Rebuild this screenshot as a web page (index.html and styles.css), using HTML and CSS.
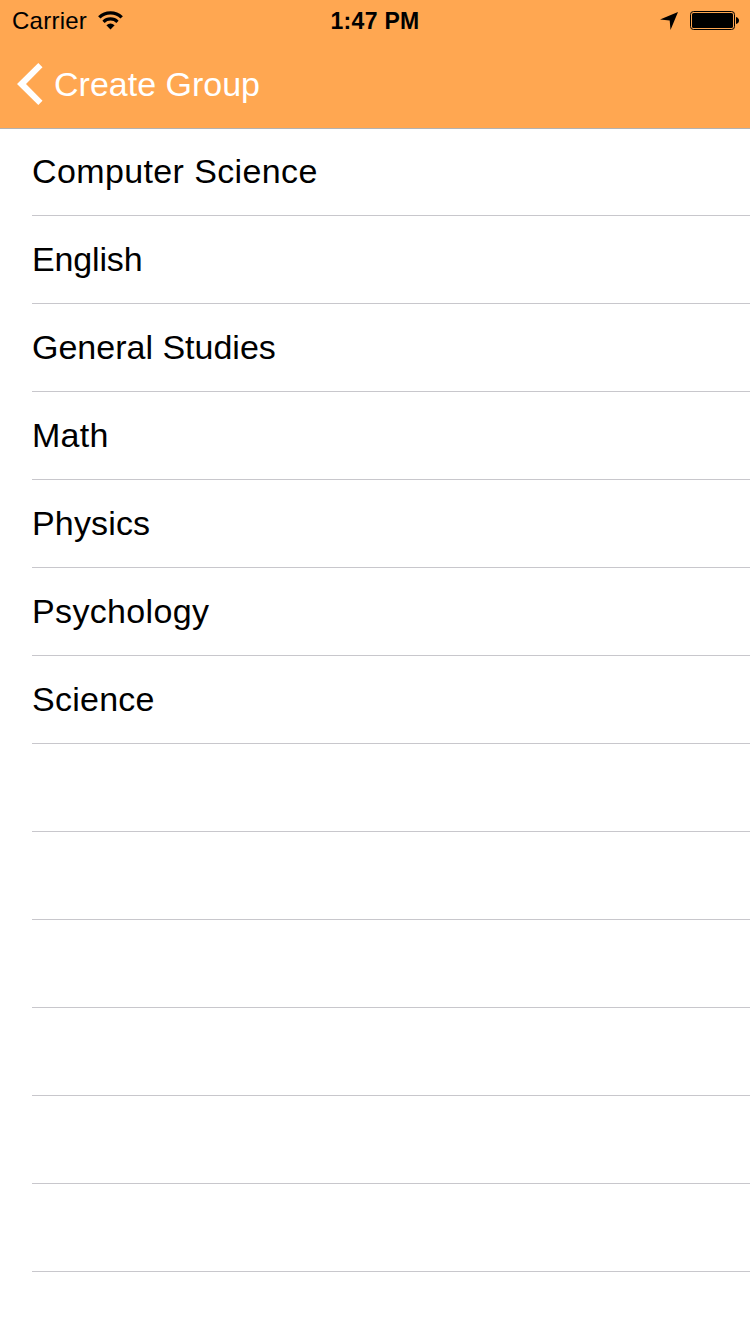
FILE: index.html
```html
<!DOCTYPE html>
<html lang="en">
<head>
<meta charset="utf-8">
<title>Create Group</title>
<link rel="stylesheet" href="styles.css">
</head>
<body>
<header class="header">
  <div class="status">
    <div class="status-left">
      <span class="carrier">Carrier</span>
      <svg class="wifi" width="26" height="20" viewBox="0 0 26 20">
        <path d="M1.3 6.4A16 16 0 0 1 23.7 6.4" fill="none" stroke="#000" stroke-width="3.4"/>
        <path d="M5.5 10.8A10 10 0 0 1 19.5 10.8" fill="none" stroke="#000" stroke-width="3.2"/>
        <path d="M12.5 18.6L8.4 14.3Q12.5 10.9 16.6 14.3Z"/>
      </svg>
    </div>
    <span class="clock">1:47 PM</span>
    <div class="status-right">
      <svg width="18" height="18" viewBox="0 0 18 18"><path d="M18 0L10.5 18L9.7 8.4L0 7.6Z"/></svg>
      <svg width="50" height="20" viewBox="0 0 50 20">
        <rect x=".5" y=".5" width="44" height="18" rx="3" fill="none" stroke="#000"/>
        <rect x="2" y="2" width="41" height="15" rx="1.6"/>
        <path d="M46 6Q49 7 49 9.5T46 13Z"/>
      </svg>
    </div>
  </div>
  <nav class="nav">
    <svg class="chevron" width="26" height="42" viewBox="0 0 26 42"><path d="M21.3 0L25.5 4.2L9 21L25.5 37.8L21.3 42L0 21Z" fill="#fff"/></svg>
    <span class="back">Create Group</span>
  </nav>
</header>
<ul class="list">
  <li class="row computer">Computer Science</li>
  <li class="row english">English</li>
  <li class="row">General Studies</li>
  <li class="row math">Math</li>
  <li class="row physics">Physics</li>
  <li class="row psychology">Psychology</li>
  <li class="row science">Science</li>
  <li class="row"></li>
  <li class="row"></li>
  <li class="row"></li>
  <li class="row"></li>
  <li class="row"></li>
  <li class="row"></li>
</ul>
</body>
</html>
```
FILE: styles.css
```css
* { box-sizing: border-box; }
body {
  margin: 0;
  height: 1334px;
  overflow: hidden;
  background: #fff;
  color: #000;
  font-family: "Liberation Sans", Arial, sans-serif;
}
svg { display: block; flex: none; }
.header {
  height: 129px;
  background: #ffa751;
  border-bottom: 1px solid #b2b2b2;
}
.status {
  display: grid;
  grid-template-columns: 1fr auto 1fr;
  align-items: center;
  height: 42px;
  padding: 0 10px 0 12px;
  font-size: 24px;
  line-height: 42px;
}
.status-left { display: flex; align-items: center; }
.carrier { width: 86px; letter-spacing: 0.25px; }
.clock {
  margin-right: 2px;
  font-weight: 700;
  font-size: 23px;
  letter-spacing: 0.3px;
  white-space: nowrap;
}
.status-right { display: flex; justify-content: flex-end; align-items: center; gap: 12px; }
.nav {
  display: flex;
  align-items: center;
  height: 84px;
  padding-left: 17px;
  color: #fff;
}
.back { margin-left: 11px; font-size: 34px; }
.list { list-style: none; margin: 0; padding: 0 0 0 32px; }
.row {
  height: 88px;
  border-bottom: 1px solid #c8c7cc;
  font-size: 34px;
  line-height: 86px;
  white-space: nowrap;
}
.row:first-child { height: 87px; line-height: 84px; }
.computer { letter-spacing: 0.38px; }
.english { letter-spacing: -0.15px; }
.math { letter-spacing: 0.3px; }
.physics { letter-spacing: 0.15px; }
.psychology { letter-spacing: 0.35px; }
.science { letter-spacing: 0.25px; }
```
